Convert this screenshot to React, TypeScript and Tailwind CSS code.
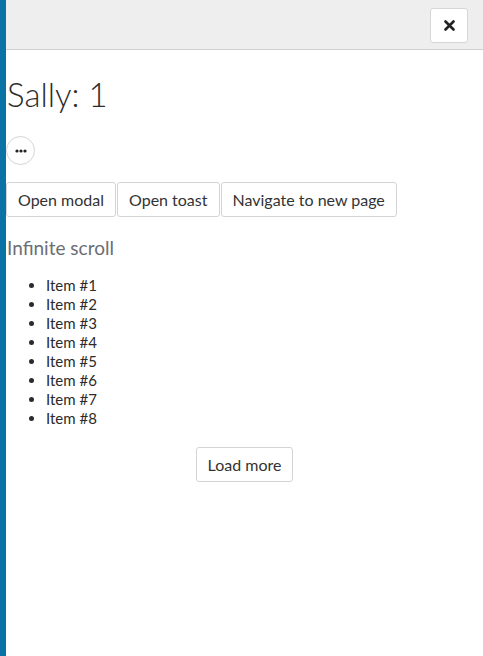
import React from "react";

const items = [1, 2, 3, 4, 5, 6, 7, 8];

const btn = "h-[35px] px-[11px] border border-[#d4d4d4] rounded-[3px] bg-white text-[16px] text-[#333]";

const App: React.FC = () => {
  return (
    <div
      className="flex min-h-[656px] bg-white text-[#333]"
      style={{ fontFamily: "Lato, 'Noto Sans', sans-serif" }}
    >
      <div className="w-[6px] shrink-0 bg-[#0b72a6]" />
      <div className="flex-1 flex flex-col">
        <div className="h-[50px] bg-[#eeeeee] border-b border-[#cfcfcf] flex items-start justify-end pt-[8px] pr-[15px]">
          <button className="w-[38px] h-[35px] bg-white border border-[#d6d6d6] rounded-[3px] flex items-center justify-center">
            <svg width="11" height="11" viewBox="0 0 11 11">
              <path d="M1.5 1.5 L9.5 9.5 M9.5 1.5 L1.5 9.5" stroke="#222" strokeWidth="2.6" strokeLinecap="round" />
            </svg>
          </button>
        </div>
        <div>
          <h1 className="mt-[24px] pl-[1px] text-[33px] leading-[40px] font-light text-[#2b2b2b]">Sally: 1</h1>
          <button className="mt-[22px] w-[29px] h-[29px] rounded-full border border-[#d4d4d4] bg-white flex items-center justify-center">
            <svg width="12" height="4" viewBox="0 0 12 4">
              <circle cx="2" cy="2" r="1.6" fill="#222" />
              <circle cx="6" cy="2" r="1.6" fill="#222" />
              <circle cx="10" cy="2" r="1.6" fill="#222" />
            </svg>
          </button>
          <div className="mt-[17px] flex">
            <button className={btn}>Open modal</button>
            <button className={`${btn} ml-[1px]`}>Open toast</button>
            <button className={`${btn} ml-[1px]`}>Navigate to new page</button>
          </div>
          <h2 className="mt-[19px] pl-[1px] text-[19px] leading-[24px] text-[#6b6e74]">Infinite scroll</h2>
          <ul className="mt-[16px] list-disc pl-[40px] text-[15px] leading-[19px] text-[#2b2b2b]">
            {items.map((n) => (
              <li key={n}>Item #{n}</li>
            ))}
          </ul>
          <div className="mt-[19px] flex justify-center">
            <button className={btn}>Load more</button>
          </div>
        </div>
      </div>
    </div>
  );
};

export default App;
